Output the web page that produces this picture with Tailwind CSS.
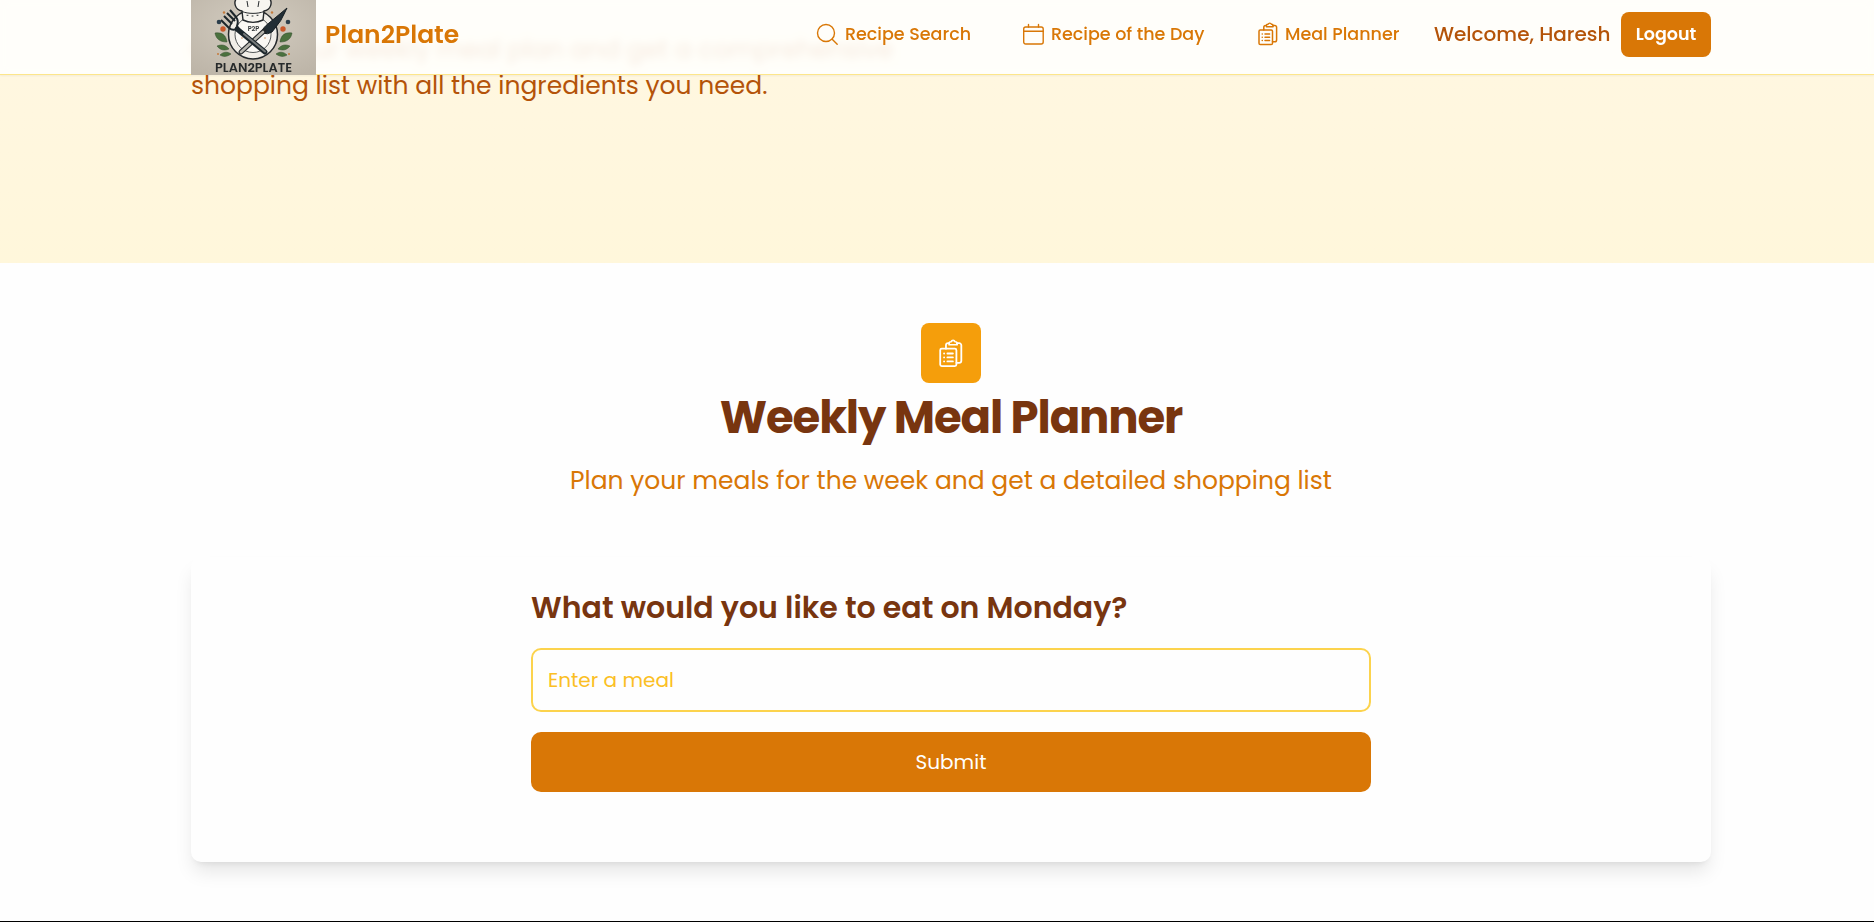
<!DOCTYPE html>
<html lang="en">
<head>
<meta charset="utf-8">
<title>Plan2Plate</title>
<script src="https://cdn.jsdelivr.net/npm/@tailwindcss/browser@4"></script>
</head>
<body class="h-[922px] overflow-hidden bg-[#fefefe] font-['Poppins','Inter',sans-serif]">
<svg class="hidden">
  <symbol id="clipboard" viewBox="0 0 20 24" fill="none" stroke="currentColor" stroke-linecap="round" stroke-linejoin="round">
    <rect x="1" y="8" width="13.500" height="14.500" rx="1.300" stroke-width="1.500"/>
    <path d="M5.800 8V5.200a1.800 1.800 0 0 1 1.800-1.800h.8M15 3.400h1.800a1.800 1.800 0 0 1 1.800 1.800v12.800a1.800 1.800 0 0 1-1.800 1.800h-2.300" stroke-width="1.500"/>
    <path d="M8.400 4.700V3.600a1.400 1.400 0 0 1 1.400-1.400h.3a1.800 1.800 0 0 1 3.300 0h.3a1.400 1.400 0 0 1 1.400 1.400v1.100z" stroke-width="1.400"/>
    <path d="M4.200 12h.1M4.200 15.300h.1M4.200 18.600h.1M7 12h4.600M7 15.300h4.600M7 18.600h4.600" stroke-width="1.500"/>
  </symbol>
</svg>

<nav class="fixed inset-x-0 top-0 z-10 h-[75px] border-b border-[#fde68a] bg-[#fffffc]/88 shadow-xs backdrop-blur-[4px]">
  <div class="ml-[191px] flex h-[68px] w-[1520px] items-center justify-between">
    <div class="flex items-center gap-[9px]">
      <svg class="mt-[7px] h-[75px] w-[125px]" viewBox="0 0 125 75">
        <defs><radialGradient id="paper" cx=".5" cy=".35" r=".75"><stop offset="0" stop-color="#d3ccc0"/><stop offset="1" stop-color="#bdb5a8"/></radialGradient></defs>
        <rect width="125" height="75" fill="url(#paper)"/>
        <circle cx="62" cy="34.500" r="24.500" fill="#f1eee8" stroke="#25292c" stroke-width="1.500"/>
        <circle cx="62" cy="34.500" r="18" fill="#faf8f4" stroke="#44484a" stroke-width=".9"/>
        <path d="M51 11c-7-1-9-9-5-13h32c4 4 2 12-5 13l-1 9c-6 3-14 3-20 0z" fill="#f7f5f0" stroke="#25292c" stroke-width="1.400"/>
        <path d="M51 11.500c6 2.500 16 2.500 22 0M57 7l-1-6M67 7l1-6" fill="none" stroke="#25292c"/>
        <path d="M56 15.300h1M61 16h1M66 15.300h1" stroke="#25292c" stroke-linecap="round"/>
        <text x="62.500" y="30.500" text-anchor="middle" font-family="Poppins" font-size="6.500" font-weight="600" fill="#34383a">P2P</text>
        <path d="M96 8 75 25.500q-5 5-4 7.500 6 2 10-1Q91 21 96 8z" fill="#222e35" stroke="#182024"/>
        <path d="m73 31-23 21" stroke="#25292c" stroke-width="5" stroke-linecap="round"/>
        <path d="m72 32-22 20" stroke="#b9b7b0" stroke-width="2.600" stroke-linecap="round"/>
        <path d="m30 20 8 8q4 3 7 1l5 4M33 16l8 8M36 13l8 8M39 10l6 7q3 4 1 9l4 6" fill="none" stroke="#1c262b" stroke-width="2"/>
        <path d="m46 29 28 23" stroke="#1c262b" stroke-width="5" stroke-linecap="round"/>
        <path d="m53 34 21 17.500" stroke="#777b7b" stroke-width="2" stroke-linecap="round"/>
        <g fill="#4b713e" stroke="#2e4a2b" stroke-width=".5">
          <path d="M24 33c7-1 11 2 12 9-7 0-11-3-12-9zM26 46c5-2 9-1 12 3-5 2-9 1-12-3zM29 55c3-3 7-4 11-1-4 3-8 3-11 1z"/>
          <path d="M101 33c-7-1-11 2-12 9 7 0 11-3 12-9zM99 46c-5-2-9-1-12 3 5 2 9 1 12-3zM96 55c-3-3-7-4-11-1 4 3 8 3 11 1z"/>
        </g>
        <g fill="#2b3e4c"><circle cx="28" cy="22" r="2.300"/><circle cx="97" cy="22" r="2.300"/></g>
        <g fill="#c9592b"><circle cx="32" cy="29" r="2.700"/><circle cx="92" cy="29" r="2.700"/></g>
        <g fill="#c47b3c"><circle cx="33" cy="12.500" r="1.200"/><circle cx="81" cy="12.500" r="1.200"/><circle cx="27" cy="54" r="1"/><circle cx="98" cy="54" r="1"/><circle cx="51" cy="38" r=".7"/><circle cx="74" cy="38" r=".7"/></g>
        <text x="24" y="72" font-family="Poppins" font-size="12.800" font-weight="600" textLength="77" lengthAdjust="spacingAndGlyphs" fill="#272a2b">PLAN2PLATE</text>
      </svg>
      <span class="mt-0.5 text-[25px] leading-9 font-semibold text-[#d97706]">Plan2Plate</span>
    </div>
    <div class="flex items-center text-[17.5px] leading-6 font-medium whitespace-nowrap text-[#d97706]">
      <a class="flex w-[207px] items-center gap-1.5">
        <svg class="h-6 w-6 shrink-0" viewBox="0 0 24 24" fill="none" stroke="currentColor" stroke-width="1.400" stroke-linecap="round"><circle cx="11" cy="11" r="8.500"/><path d="m17.200 17.200 5 5"/></svg>
        <span>Recipe Search</span>
      </a>
      <a class="flex w-[236px] items-center gap-[5px]">
        <svg class="h-6 w-6 shrink-0" viewBox="0 0 24 24" fill="none" stroke="currentColor" stroke-width="1.400" stroke-linecap="round"><rect x="1.700" y="5" width="19.500" height="17" rx="2"/><path d="M1.700 9.200h19.500M6.500 2.500V5M16.500 2.500V5"/></svg>
        <span>Recipe of the Day</span>
      </a>
      <a class="flex w-[176px] items-center gap-[7px]">
        <svg class="h-6 w-5 shrink-0"><use href="#clipboard"/></svg>
        <span>Meal Planner</span>
      </a>
      <span class="w-[187px] text-xl leading-6 text-[#b45309]">Welcome, Haresh</span>
      <button class="mt-px h-[45px] w-[90px] rounded-lg bg-[#d97706] pb-px text-[17.5px] leading-6 font-semibold text-white">Logout</button>
    </div>
  </div>
</nav>

<header class="h-[263px] bg-linear-to-b from-[#fff7e2] to-[#fff7db] pt-8 pl-[191px]">
  <p class="text-[25px] leading-9 text-[#b45309]">Create your weekly meal plan and get a comprehensive<br>shopping list with all the ingredients you need.</p>
</header>

<main class="flex h-[658px] flex-col items-center pt-[60px] pl-[28px]">
  <div class="flex h-[60px] w-[60px] shrink-0 items-center justify-center rounded-lg bg-[#f59e0b] text-white">
    <svg class="h-[29px] w-6"><use href="#clipboard"/></svg>
  </div>
  <h2 class="mt-[11px] text-[45px] leading-[48px] font-bold tracking-tight text-[#78350f]">Weekly Meal Planner</h2>
  <p class="mt-[21px] text-[25px] leading-9 text-[#d97706]">Plan your meals for the week and get a detailed shopping list</p>
  <form class="mt-[58px] flex h-[305px] w-[1520px] flex-col items-center rounded-[10px] bg-[#fefefe] pt-[31px] shadow-[0_12.5px_18.75px_-3.75px_rgba(0,0,0,.1),0_5px_7.5px_-5px_rgba(0,0,0,.1)]">
    <div class="flex w-[840px] flex-col">
      <h3 class="text-[30px] leading-10 font-semibold text-[#78350f]">What would you like to eat on Monday?</h3>
      <input class="mt-5 h-16 rounded-[10px] border-2 border-[#fcd34d] px-[15px] text-xl placeholder:text-[#fbbf24]" placeholder="Enter a meal">
      <button type="button" class="mt-5 h-[60px] rounded-[10px] bg-[#d97706] text-xl text-white">Submit</button>
    </div>
  </form>
</main>
<footer class="h-px bg-black"></footer>
</body>
</html>
